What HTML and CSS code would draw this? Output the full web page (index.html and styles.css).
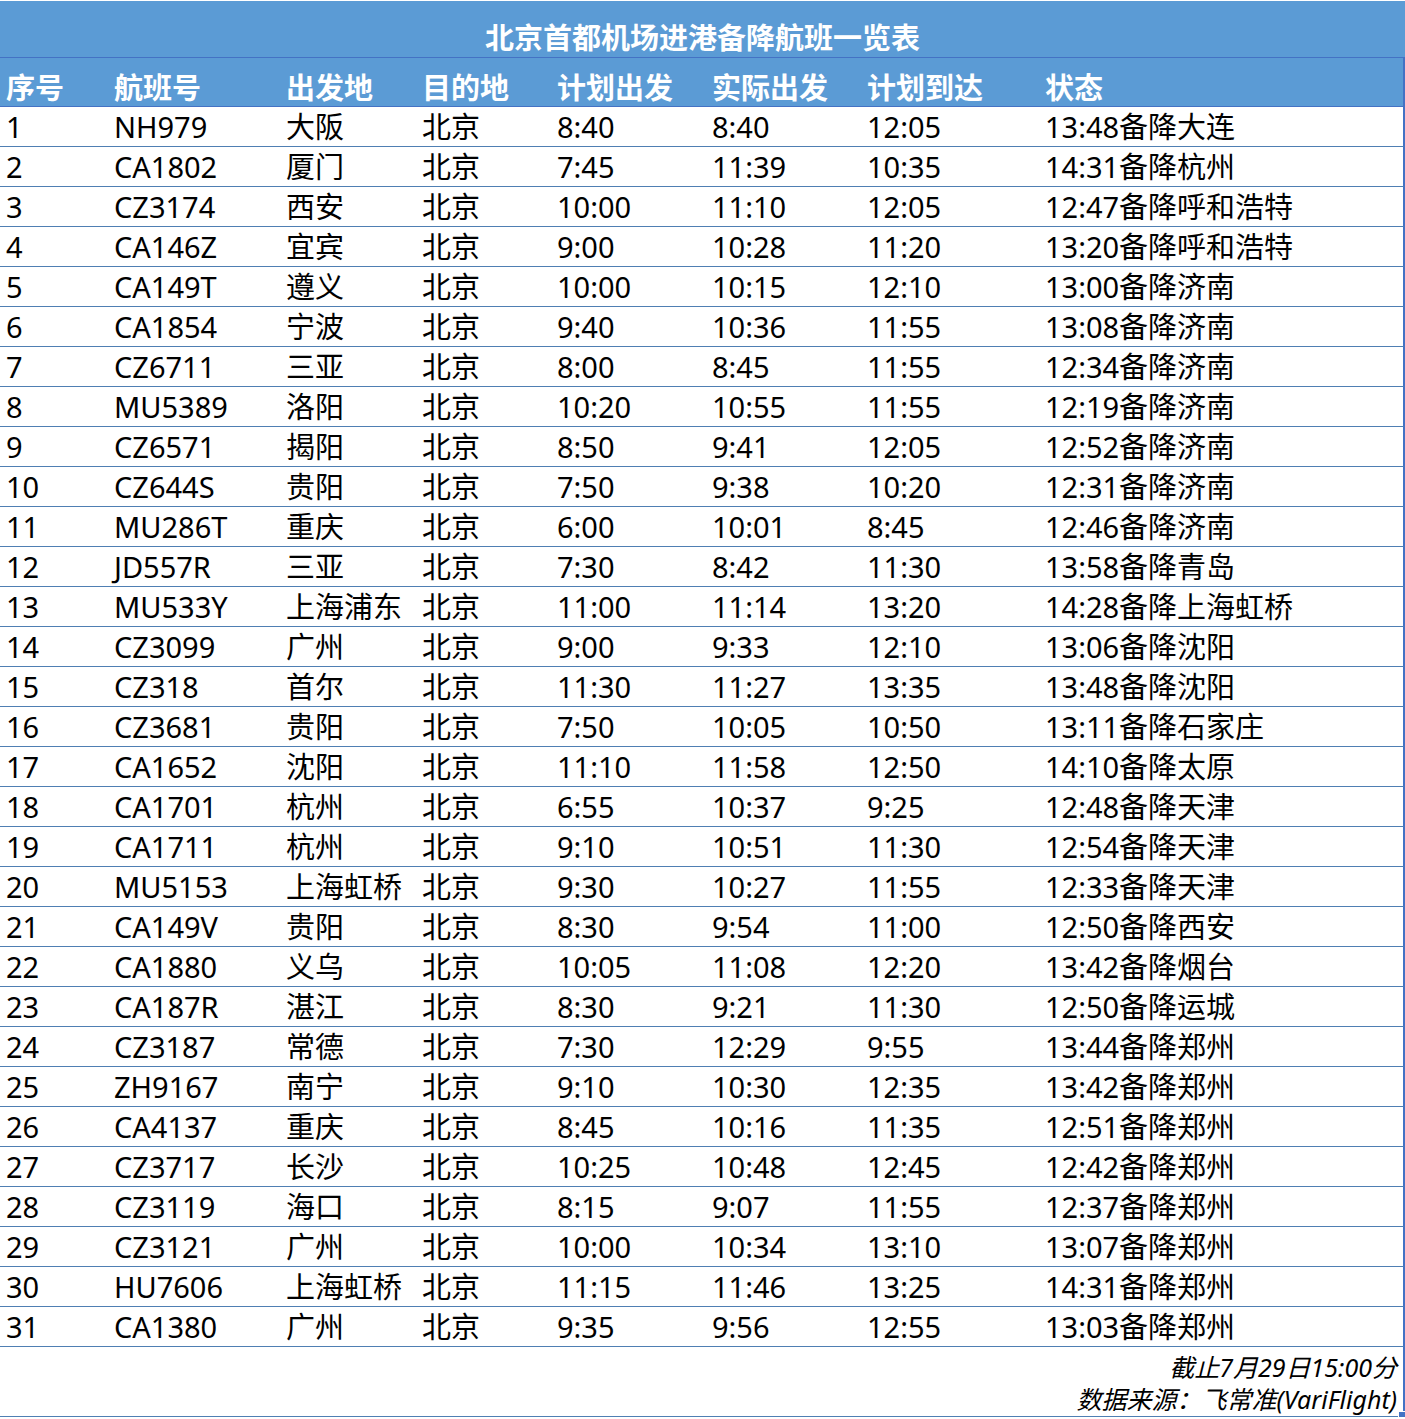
FILE: index.html
```html
<!DOCTYPE html>
<html lang="zh-CN">
<head>
<meta charset="utf-8">
<title>北京首都机场进港备降航班一览表</title>
<link rel="stylesheet" href="styles.css">
</head>
<body>
<div class="sheet">
  <div class="title">北京首都机场进港备降航班一览表</div>
  <div class="row head">
    <div>序号</div><div>航班号</div><div>出发地</div><div>目的地</div><div>计划出发</div><div>实际出发</div><div>计划到达</div><div>状态</div>
  </div>
  <div class="row"><div>1</div><div>NH979</div><div>大阪</div><div>北京</div><div>8:40</div><div>8:40</div><div>12:05</div><div>13:48备降大连</div></div>
  <div class="row"><div>2</div><div>CA1802</div><div>厦门</div><div>北京</div><div>7:45</div><div>11:39</div><div>10:35</div><div>14:31备降杭州</div></div>
  <div class="row"><div>3</div><div>CZ3174</div><div>西安</div><div>北京</div><div>10:00</div><div>11:10</div><div>12:05</div><div>12:47备降呼和浩特</div></div>
  <div class="row"><div>4</div><div>CA146Z</div><div>宜宾</div><div>北京</div><div>9:00</div><div>10:28</div><div>11:20</div><div>13:20备降呼和浩特</div></div>
  <div class="row"><div>5</div><div>CA149T</div><div>遵义</div><div>北京</div><div>10:00</div><div>10:15</div><div>12:10</div><div>13:00备降济南</div></div>
  <div class="row"><div>6</div><div>CA1854</div><div>宁波</div><div>北京</div><div>9:40</div><div>10:36</div><div>11:55</div><div>13:08备降济南</div></div>
  <div class="row"><div>7</div><div>CZ6711</div><div>三亚</div><div>北京</div><div>8:00</div><div>8:45</div><div>11:55</div><div>12:34备降济南</div></div>
  <div class="row"><div>8</div><div>MU5389</div><div>洛阳</div><div>北京</div><div>10:20</div><div>10:55</div><div>11:55</div><div>12:19备降济南</div></div>
  <div class="row"><div>9</div><div>CZ6571</div><div>揭阳</div><div>北京</div><div>8:50</div><div>9:41</div><div>12:05</div><div>12:52备降济南</div></div>
  <div class="row"><div>10</div><div>CZ644S</div><div>贵阳</div><div>北京</div><div>7:50</div><div>9:38</div><div>10:20</div><div>12:31备降济南</div></div>
  <div class="row"><div>11</div><div>MU286T</div><div>重庆</div><div>北京</div><div>6:00</div><div>10:01</div><div>8:45</div><div>12:46备降济南</div></div>
  <div class="row"><div>12</div><div>JD557R</div><div>三亚</div><div>北京</div><div>7:30</div><div>8:42</div><div>11:30</div><div>13:58备降青岛</div></div>
  <div class="row"><div>13</div><div>MU533Y</div><div>上海浦东</div><div>北京</div><div>11:00</div><div>11:14</div><div>13:20</div><div>14:28备降上海虹桥</div></div>
  <div class="row"><div>14</div><div>CZ3099</div><div>广州</div><div>北京</div><div>9:00</div><div>9:33</div><div>12:10</div><div>13:06备降沈阳</div></div>
  <div class="row"><div>15</div><div>CZ318</div><div>首尔</div><div>北京</div><div>11:30</div><div>11:27</div><div>13:35</div><div>13:48备降沈阳</div></div>
  <div class="row"><div>16</div><div>CZ3681</div><div>贵阳</div><div>北京</div><div>7:50</div><div>10:05</div><div>10:50</div><div>13:11备降石家庄</div></div>
  <div class="row"><div>17</div><div>CA1652</div><div>沈阳</div><div>北京</div><div>11:10</div><div>11:58</div><div>12:50</div><div>14:10备降太原</div></div>
  <div class="row"><div>18</div><div>CA1701</div><div>杭州</div><div>北京</div><div>6:55</div><div>10:37</div><div>9:25</div><div>12:48备降天津</div></div>
  <div class="row"><div>19</div><div>CA1711</div><div>杭州</div><div>北京</div><div>9:10</div><div>10:51</div><div>11:30</div><div>12:54备降天津</div></div>
  <div class="row"><div>20</div><div>MU5153</div><div>上海虹桥</div><div>北京</div><div>9:30</div><div>10:27</div><div>11:55</div><div>12:33备降天津</div></div>
  <div class="row"><div>21</div><div>CA149V</div><div>贵阳</div><div>北京</div><div>8:30</div><div>9:54</div><div>11:00</div><div>12:50备降西安</div></div>
  <div class="row"><div>22</div><div>CA1880</div><div>义乌</div><div>北京</div><div>10:05</div><div>11:08</div><div>12:20</div><div>13:42备降烟台</div></div>
  <div class="row"><div>23</div><div>CA187R</div><div>湛江</div><div>北京</div><div>8:30</div><div>9:21</div><div>11:30</div><div>12:50备降运城</div></div>
  <div class="row"><div>24</div><div>CZ3187</div><div>常德</div><div>北京</div><div>7:30</div><div>12:29</div><div>9:55</div><div>13:44备降郑州</div></div>
  <div class="row"><div>25</div><div>ZH9167</div><div>南宁</div><div>北京</div><div>9:10</div><div>10:30</div><div>12:35</div><div>13:42备降郑州</div></div>
  <div class="row"><div>26</div><div>CA4137</div><div>重庆</div><div>北京</div><div>8:45</div><div>10:16</div><div>11:35</div><div>12:51备降郑州</div></div>
  <div class="row"><div>27</div><div>CZ3717</div><div>长沙</div><div>北京</div><div>10:25</div><div>10:48</div><div>12:45</div><div>12:42备降郑州</div></div>
  <div class="row"><div>28</div><div>CZ3119</div><div>海口</div><div>北京</div><div>8:15</div><div>9:07</div><div>11:55</div><div>12:37备降郑州</div></div>
  <div class="row"><div>29</div><div>CZ3121</div><div>广州</div><div>北京</div><div>10:00</div><div>10:34</div><div>13:10</div><div>13:07备降郑州</div></div>
  <div class="row"><div>30</div><div>HU7606</div><div>上海虹桥</div><div>北京</div><div>11:15</div><div>11:46</div><div>13:25</div><div>14:31备降郑州</div></div>
  <div class="row"><div>31</div><div>CA1380</div><div>广州</div><div>北京</div><div>9:35</div><div>9:56</div><div>12:55</div><div>13:03备降郑州</div></div>
  <div class="foot">
    <div class="note">截止7月29日15:00分</div>
    <div class="note">数据来源：飞常准(VariFlight)</div>
    <span class="handle"></span>
  </div>
</div>
</body>
</html>
```

FILE: styles.css
```css
html, body {
  margin: 0;
  padding: 0;
  background: #ffffff;
}
body {
  font-family: "Noto Sans", "Noto Sans CJK SC", sans-serif;
  color: #000000;
}
.sheet {
  width: 1405px;
  padding-top: 1px;
  position: relative;
}
.title {
  height: 57px;
  box-sizing: border-box;
  background: #5b9bd5;
  border-bottom: 1px solid #4472c4;
  color: #ffffff;
  font-weight: bold;
  font-size: 29px;
  line-height: 36px;
  padding-top: 19px;
  text-align: center;
}
.row {
  display: grid;
  grid-template-columns: 108px 172px 136px 135px 155px 155px 178px 1fr;
  padding-left: 6px;
  height: 40px;
  box-sizing: border-box;
  border-bottom: 1px solid #4f7fb3;
  border-right: 2px solid #4472c4;
  font-size: 29px;
  line-height: 36px;
  white-space: nowrap;
}
.row > div {
  padding-top: 2px;
}
.head {
  height: 49px;
  background: #5b9bd5;
  color: #ffffff;
  font-weight: bold;
  border-bottom: 1px solid #4472c4;
}
.head > div {
  padding-top: 12px;
}
.foot {
  height: 70px;
  box-sizing: border-box;
  border-bottom: 1px solid #4f7fb3;
  border-right: 2px solid #4472c4;
  text-align: right;
  padding-right: 6px;
  padding-top: 4px;
  font-style: italic;
  font-size: 25px;
  line-height: 32px;
  position: relative;
}
.handle {
  position: absolute;
  right: -3px;
  bottom: -3px;
  width: 6px;
  height: 6px;
  background: #4472c4;
  border: 1px solid #ffffff;
}
```
